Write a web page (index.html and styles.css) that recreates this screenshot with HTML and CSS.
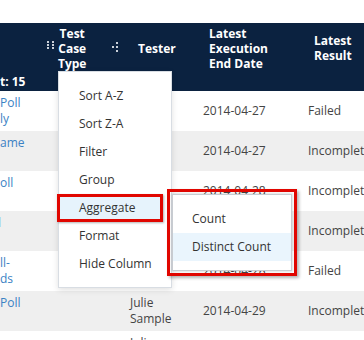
FILE: index.html
```html
<!DOCTYPE html>
<html lang="en">
<head>
  <meta charset="UTF-8">
  <meta name="viewport" content="width=device-width, initial-scale=1.0">
  <title>Test Case Grid</title>
  <link rel="stylesheet" href="styles.css">
</head>
<body>
  <div class="page">
    <div class="grid-wrap">
      <table class="grid">
        <colgroup>
          <col class="c-name">
          <col class="c-type">
          <col class="c-tester">
          <col class="c-date">
          <col class="c-result">
        </colgroup>
        <thead>
          <tr class="head-titles">
            <th></th>
            <th>
              <div class="th-inner">
                <svg class="handle" width="7" height="8" viewBox="0 0 7 8">
                  <rect x="0" y="0" width="2" height="2"/><rect x="5" y="0" width="2" height="2"/>
                  <rect x="0" y="3" width="2" height="2"/><rect x="5" y="3" width="2" height="2"/>
                  <rect x="0" y="6" width="2" height="2"/><rect x="5" y="6" width="2" height="2"/>
                </svg>
                <span class="th-type">Test Case Type</span>
                <svg class="handle handle-move" width="6" height="10" viewBox="0 0 6 10">
                  <rect x="4" y="0" width="2" height="2"/>
                  <rect x="0" y="4" width="2" height="2"/><rect x="4" y="4" width="2" height="2"/>
                  <rect x="4" y="8" width="2" height="2"/>
                </svg>
              </div>
            </th>
            <th class="th-pad">Tester</th>
            <th class="th-pad"><span class="th-date">Latest Execution End Date</span></th>
            <th class="th-pad"><span class="th-result">Latest Result</span></th>
          </tr>
          <tr class="head-count">
            <th>t: 15</th>
            <th></th>
            <th></th>
            <th></th>
            <th></th>
          </tr>
        </thead>
        <tbody>
          <tr>
            <td class="cell-name">Poll<br>ly</td>
            <td></td>
            <td class="cell-tester"></td>
            <td>2014-04-27</td>
            <td>Failed</td>
          </tr>
          <tr>
            <td class="cell-name">ame<br>&nbsp;</td>
            <td></td>
            <td class="cell-tester"></td>
            <td>2014-04-27</td>
            <td>Incomplete</td>
          </tr>
          <tr>
            <td class="cell-name">oll<br>&nbsp;</td>
            <td></td>
            <td class="cell-tester"></td>
            <td>2014-04-28</td>
            <td>Incomplete</td>
          </tr>
          <tr>
            <td class="cell-name cell-cut">l<br>&nbsp;</td>
            <td></td>
            <td class="cell-tester"></td>
            <td>2014-04-28</td>
            <td>Incomplete</td>
          </tr>
          <tr>
            <td class="cell-name">ll-<br>ds</td>
            <td></td>
            <td class="cell-tester"></td>
            <td>2014-04-28</td>
            <td>Failed</td>
          </tr>
          <tr>
            <td class="cell-name">Poll<br>&nbsp;</td>
            <td></td>
            <td class="cell-tester">Julie<br>Sample</td>
            <td>2014-04-29</td>
            <td>Incomplete</td>
          </tr>
          <tr>
            <td class="cell-name"></td>
            <td></td>
            <td class="cell-tester">Julie<br>Sample</td>
            <td>2014-04-29</td>
            <td>Incomplete</td>
          </tr>
        </tbody>
      </table>

      <div class="col-menu">
        <div class="menu-item">Sort A-Z</div>
        <div class="menu-item">Sort Z-A</div>
        <div class="menu-item">Filter</div>
        <div class="menu-item">Group</div>
        <div class="menu-item active">Aggregate</div>
        <div class="menu-item">Format</div>
        <div class="menu-item">Hide Column</div>

        <div class="sub-mark">
          <div class="sub-menu">
            <div class="sub-item">Count</div>
            <div class="sub-item active">Distinct Count</div>
          </div>
        </div>
      </div>
    </div>
  </div>
</body>
</html>
```

FILE: styles.css
```css
body {
  margin: 0;
  width: 364px;
  height: 340px;
  overflow: hidden;
  background: #fff;
  color: #444;
  font-family: "Open Sans", "Liberation Sans", sans-serif;
  font-size: 12px;
}
.page {
  padding-top: 23px;
}
.grid-wrap {
  position: relative;
  width: 364px;
  height: 317px;
  overflow: hidden;
}

/*---------------------------------- GRID ----------------------------------*/
.grid {
  border-collapse: collapse;
  table-layout: fixed;
  width: 380px;
}
.c-name { width: 44px; }
.c-type { width: 80px; }
.c-tester { width: 72px; }
.c-date { width: 105px; }
.c-result { width: 79px; }

.grid th {
  padding: 0;
  background: #0b2240;
  color: #fff;
  font-weight: 700;
  text-align: left;
  vertical-align: middle;
  line-height: 15px;
}
.head-titles th {
  height: 50px;
}
.head-count th {
  height: 18px;
  line-height: 18px;
  white-space: nowrap;
}
.th-inner {
  display: flex;
  align-items: center;
  padding: 0 6px 0 3px;
}
.handle {
  fill: #c9d0d9;
  flex-shrink: 0;
}
.handle:first-child {
  margin-bottom: 6px;
}
.handle-move {
  margin-left: auto;
  margin-bottom: 2px;
}
.th-type {
  display: block;
  width: min-content;
  margin-left: 4px;
  text-align: center;
}
.grid th.th-pad {
  padding-left: 13px;
}
.grid th.th-pad:nth-child(3) {
  padding-left: 14px;
}
.th-date {
  display: block;
  width: 60px;
}
.th-result {
  display: block;
  width: 45px;
}

.grid td {
  height: 40px;
  padding: 0 0 0 7px;
  line-height: 16px;
  vertical-align: middle;
  white-space: nowrap;
  overflow: hidden;
}
.grid tbody tr:nth-child(even) td {
  background: #efefef;
}
.grid td.cell-name {
  padding-left: 0;
  color: #3b82c4;
}
.grid td.cell-cut {
  text-indent: -2px;
}
.grid td.cell-tester {
  padding-left: 6px;
}

/*---------------------------------- COLUMN MENU ----------------------------------*/
.col-menu {
  position: absolute;
  left: 58px;
  top: 48px;
  width: 114px;
  box-sizing: border-box;
  padding: 10px 0 9px;
  background: #fff;
  border: 1px solid #d8dde3;
  box-shadow: 0 2px 6px rgba(0, 0, 0, 0.12);
  color: #333;
}
.menu-item {
  height: 28px;
  line-height: 28px;
  padding-left: 20px;
  white-space: nowrap;
}
.menu-item.active {
  box-sizing: border-box;
  margin: 0 8px 0 -2px;
  padding-left: 19px;
  line-height: 22px;
  border: 3px solid #e10600;
  background: #e6f3fc;
  box-shadow: 1px 1px 2px rgba(0, 0, 0, 0.3);
}

.sub-mark {
  position: absolute;
  left: 108px;
  top: 117px;
  padding: 2px;
  border: 3px solid #e10600;
  box-shadow: 2px 2px 3px rgba(0, 0, 0, 0.3);
}
.sub-menu {
  width: 120px;
  box-sizing: border-box;
  padding: 10px 0 9px;
  background: #fff;
  border: 1px solid #c8ccd1;
  box-shadow: 0 0 2px 1px rgba(0, 0, 0, 0.12);
}
.sub-item {
  height: 28px;
  line-height: 28px;
  padding-left: 19px;
  white-space: nowrap;
}
.sub-item.active {
  background: #eaf5fd;
}
```
